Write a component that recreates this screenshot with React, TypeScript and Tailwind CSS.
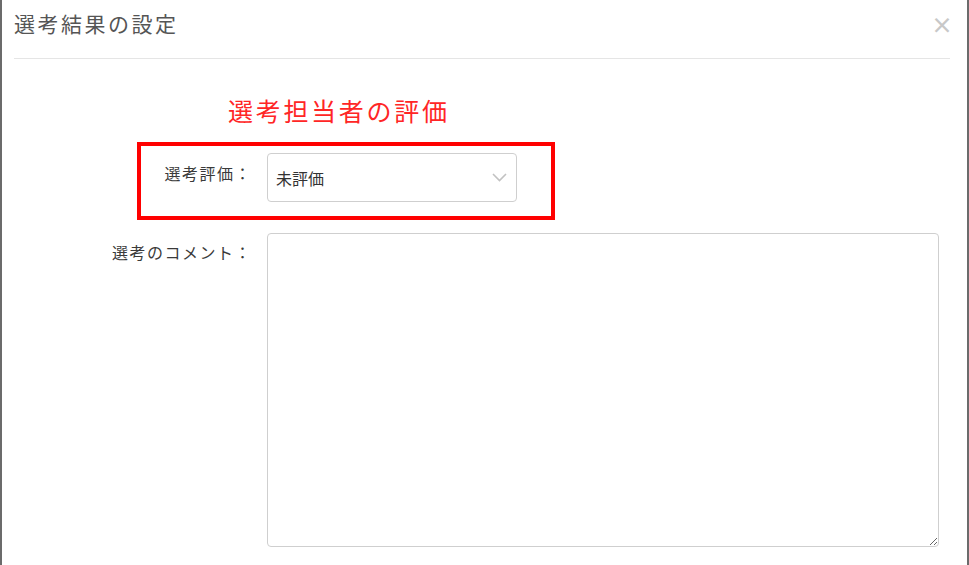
const jp = { fontFamily: '"Noto Sans CJK JP", "Noto Sans", sans-serif' };

function Chevron() {
  return (
    <svg width="15" height="9" viewBox="0 0 15 9" fill="none">
      <path d="M1 1l6.5 6.5L14 1" stroke="#c2c2c2" strokeWidth="1.6" />
    </svg>
  );
}

export default function App() {
  return (
    <div
      className="w-[969px] h-[565px] bg-white border-x-2 border-[#6b6b6b] overflow-hidden"
      style={jp}
    >
      {/* Header */}
      <div className="ml-3 mr-[17px] h-[59px] border-b border-[#e5e5e5] flex items-start justify-between">
        <h4 className="mt-[8px] text-[21px] leading-[30px] tracking-[2.5px] text-[#555]">
          選考結果の設定
        </h4>
        <button className="mt-[8px] -mr-[3px] text-[22px] leading-[30px] font-bold text-[#c8c8c8]">
          ×
        </button>
      </div>

      {/* Body */}
      <div className="pt-[33px]">
        <p className="pl-[226px] text-[25px] leading-[36px] tracking-[2.7px] text-[#ff2626]">
          選考担当者の評価
        </p>

        <div className="mt-[14px] ml-[135px] w-[418px] h-[78px] border-4 border-[#ff0000] flex items-start gap-[15px]">
          <label className="w-[111px] mt-[15px] text-right text-[16px] leading-[24px] tracking-[1.5px] text-[#3a3a3a]">
            選考評価：
          </label>
          <div className="mt-[7px] w-[250px] h-[49px] rounded-[4px] border border-[#cfcfcf] flex items-center justify-between pl-[8px] pr-[9px]">
            <span className="text-[16px] text-[#333]">未評価</span>
            <Chevron />
          </div>
        </div>

        <div className="mt-[13px] flex items-start gap-[15px]">
          <label className="w-[250px] mt-[7px] text-right text-[16px] leading-[24px] tracking-[1.5px] text-[#3a3a3a]">
            選考のコメント：
          </label>
          <textarea className="w-[672px] h-[314px] rounded-[4px] border border-[#cfcfcf] outline-none" />
        </div>
      </div>
    </div>
  );
}
